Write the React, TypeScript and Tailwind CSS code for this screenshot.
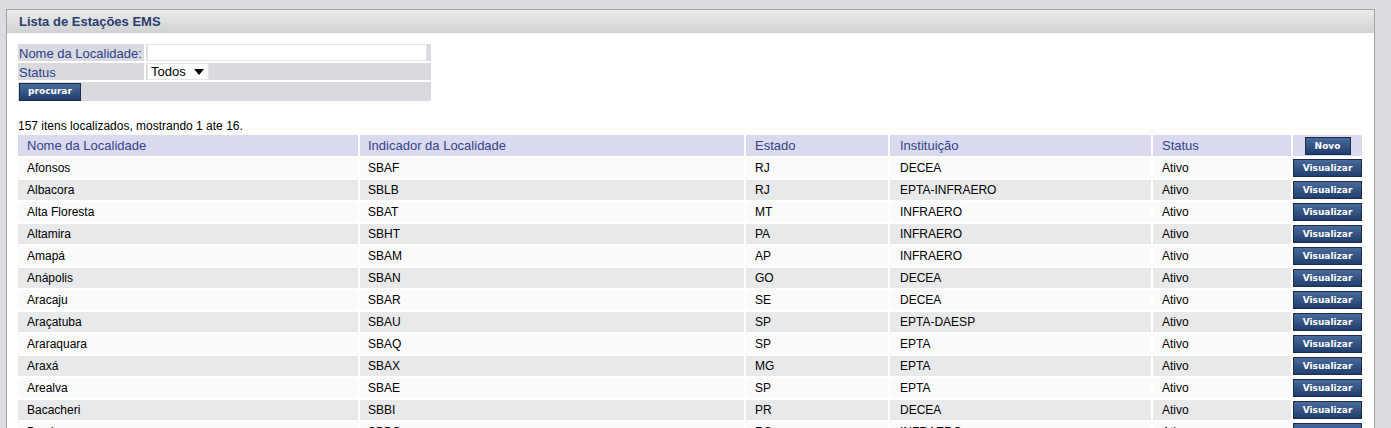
import React from "react";

type Estacao = {
  nome: string;
  indicador: string;
  estado: string;
  instituicao: string;
  status: string;
};

const estacoes: Estacao[] = [
  { nome: "Afonsos", indicador: "SBAF", estado: "RJ", instituicao: "DECEA", status: "Ativo" },
  { nome: "Albacora", indicador: "SBLB", estado: "RJ", instituicao: "EPTA-INFRAERO", status: "Ativo" },
  { nome: "Alta Floresta", indicador: "SBAT", estado: "MT", instituicao: "INFRAERO", status: "Ativo" },
  { nome: "Altamira", indicador: "SBHT", estado: "PA", instituicao: "INFRAERO", status: "Ativo" },
  { nome: "Amapá", indicador: "SBAM", estado: "AP", instituicao: "INFRAERO", status: "Ativo" },
  { nome: "Anápolis", indicador: "SBAN", estado: "GO", instituicao: "DECEA", status: "Ativo" },
  { nome: "Aracaju", indicador: "SBAR", estado: "SE", instituicao: "DECEA", status: "Ativo" },
  { nome: "Araçatuba", indicador: "SBAU", estado: "SP", instituicao: "EPTA-DAESP", status: "Ativo" },
  { nome: "Araraquara", indicador: "SBAQ", estado: "SP", instituicao: "EPTA", status: "Ativo" },
  { nome: "Araxá", indicador: "SBAX", estado: "MG", instituicao: "EPTA", status: "Ativo" },
  { nome: "Arealva", indicador: "SBAE", estado: "SP", instituicao: "EPTA", status: "Ativo" },
  { nome: "Bacacheri", indicador: "SBBI", estado: "PR", instituicao: "DECEA", status: "Ativo" },
  { nome: "Bagé", indicador: "SBBG", estado: "RS", instituicao: "INFRAERO", status: "Ativo" },
  { nome: "Barra do Garças", indicador: "SBBW", estado: "MT", instituicao: "INFRAERO", status: "Ativo" },
  { nome: "Barreiras", indicador: "SBBS", estado: "BA", instituicao: "INFRAERO", status: "Ativo" },
  { nome: "Bauru", indicador: "SBBU", estado: "SP", instituicao: "EPTA-DAESP", status: "Ativo" },
];

const btn =
  "border border-[#1c2c46] bg-gradient-to-b from-[#4a6a9c] to-[#213f6e] text-white font-bold font-['DejaVu_Sans',sans-serif] leading-none";

export default function App() {
  return (
    <div className="h-screen overflow-hidden bg-[#dbdcdf] pt-[9px] pl-[6px] pr-[16px] font-['Liberation_Sans',Arial,sans-serif] text-[12px] text-black">
      <div className="border border-[#a3a3a3] bg-white">
        {/* cabeçalho */}
        <div className="h-[23px] bg-gradient-to-b from-[#eaebeb] to-[#d0d2d2] pl-[12px] flex items-center">
          <h1 className="font-bold text-[13px] text-[#2c3c6c]">Lista de Estações EMS</h1>
        </div>

        <div className="pl-[9px] pr-[10px] pt-[9px] pb-4">
          {/* filtro */}
          <table className="border-separate border-spacing-[2px] w-[417px] table-fixed text-[13px]">
            <tbody>
              <tr className="h-[17px]">
                <td className="w-[126px] bg-[#d9dadf] text-[#2f3d8a] px-[1px] pt-[1px] leading-none">Nome da Localidade:</td>
                <td className="bg-[#d9dadf] p-0 pl-[1px]">
                  <input
                    type="text"
                    className="block w-[280px] h-[17px] bg-white border border-[#e4e4e4] outline-none"
                  />
                </td>
              </tr>
              <tr className="h-[17px]">
                <td className="bg-[#d9dadf] text-[#2f3d8a] px-[1px] pt-[1px] leading-none">Status</td>
                <td className="bg-[#d9dadf] p-0 pl-[1px]">
                  <div className="w-[62px] h-[17px] bg-white border border-[#e4e4e4] flex items-center gap-[8px] pl-[3px]">
                    <span className="leading-none">Todos</span>
                    <svg width="10" height="6" viewBox="0 0 10 6">
                      <path d="M0 0h10L5 6z" fill="#000" />
                    </svg>
                  </div>
                </td>
              </tr>
              <tr className="h-[19px]">
                <td colSpan={2} className="bg-[#d9dadf] p-0 pl-[1px]">
                  <button className={`${btn} block w-[62px] h-[18px] text-[9px]`}>procurar</button>
                </td>
              </tr>
            </tbody>
          </table>

          <p className="mt-[16px] pl-[2px] leading-[14px]">157 itens localizados, mostrando 1 ate 16.</p>

          {/* lista */}
          <table className="border-separate border-spacing-[2px] w-[1348px] table-fixed">
            <colgroup>
              <col className="w-[340px]" />
              <col className="w-[384px]" />
              <col className="w-[142px]" />
              <col className="w-[261px]" />
              <col className="w-[138px]" />
              <col className="w-[69px]" />
            </colgroup>
            <thead>
              <tr className="h-[21px] bg-[#dadaee] text-[#34428c] text-left text-[13px]">
                <th className="font-normal pl-[9px]">Nome da Localidade</th>
                <th className="font-normal pl-[8px]">Indicador da Localidade</th>
                <th className="font-normal pl-[9px]">Estado</th>
                <th className="font-normal pl-[10px]">Instituição</th>
                <th className="font-normal pl-[9px]">Status</th>
                <th className="p-0 text-center">
                  <button className={`${btn} inline-block w-[46px] h-[18px] text-[9px] align-middle`}>Novo</button>
                </th>
              </tr>
            </thead>
            <tbody>
              {estacoes.map((e, i) => (
                <tr key={e.indicador} className={`h-[20px] ${i % 2 === 0 ? "bg-[#fafafa]" : "bg-[#e8e9eb]"}`}>
                  <td className="pl-[9px]">{e.nome}</td>
                  <td className="pl-[8px]">{e.indicador}</td>
                  <td className="pl-[9px]">{e.estado}</td>
                  <td className="pl-[10px]">{e.instituicao}</td>
                  <td className="pl-[9px]">{e.status}</td>
                  <td className="p-0 bg-white">
                    <button className={`${btn} block w-[69px] h-[18px] text-[9px]`}>Visualizar</button>
                  </td>
                </tr>
              ))}
            </tbody>
          </table>
        </div>
      </div>
    </div>
  );
}
